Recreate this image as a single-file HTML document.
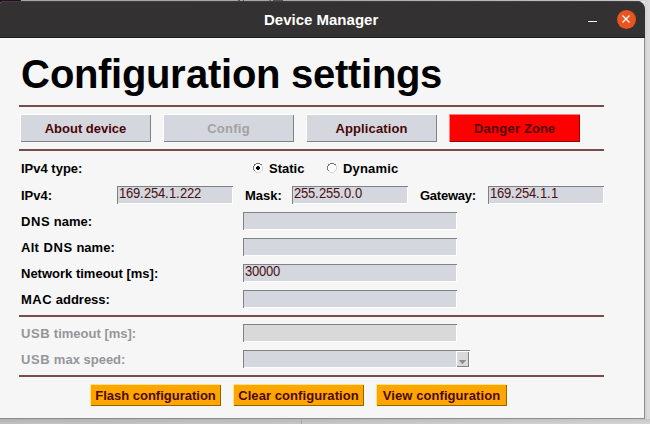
<!DOCTYPE html>
<html><head><meta charset="utf-8">
<style>
*{margin:0;padding:0;box-sizing:border-box}
html,body{width:650px;height:424px;overflow:hidden;background:#e4e4e4;font-family:"Liberation Sans",sans-serif}
.abs{position:absolute}
.hd b{display:inline-block;font-weight:bold}
svg{display:block}
#win{position:absolute;left:-1px;top:1px;width:646px;height:418px;border-radius:5.5px 8px 0 0;background:#f6f6f6;overflow:hidden}

#title{position:absolute;left:0;top:0;width:100%;height:37px;background:#333131;box-shadow:inset 0 1px 0 #403e3e;border-bottom:1px solid #1c1c1c}
.t{position:absolute;white-space:nowrap;line-height:1}
.lbl{font-weight:bold;font-size:13px;color:#000}
.sep{position:absolute;left:19px;width:585px;height:2px;background:#7a4b4b}
.btn{position:absolute;width:131px;height:28px;background:#d4d7de;padding:1px;box-shadow:inset 1px 1px 0 #fff,inset -1px -1px 0 #7f8185;font-weight:bold;font-size:13px;color:#4b0505;text-align:center;line-height:27px}
.ent i{font-style:normal;display:inline-block;transform:scaleY(1.08);transform-origin:50% 11.5px}
.ent{position:absolute;height:18px;background:#d4d7de;padding:1px 1px 1px 2px;box-shadow:inset 1px 1px 0 #7f8185,inset -1px -1px 0 #fff;font-size:13px;color:#4a0f0f;line-height:14px}
.obtn{position:absolute;width:131px;height:22px;background:#ffa500;padding:1px;box-shadow:inset 1px 1px 0 #ffe77f,inset -1px -1px 0 #996300;font-weight:bold;font-size:13px;color:#4a0a00;text-align:center;line-height:21px;letter-spacing:.07px}
</style></head>
<body>
<div class="abs" style="left:0;top:0;width:650px;height:1px;background:linear-gradient(to right,#a6a6a6,#a8a8a8 50%,#c4c4c4 95%,#d8d8d8)"></div>
<div class="abs" style="left:0;top:0;width:20px;height:1px;background:#2c0a22"></div>
<div class="abs" style="left:20px;top:0;width:1px;height:1px;background:#222"></div>
<div class="abs" style="left:238px;top:0;width:2px;height:1px;background:#5a5a5a"></div>
<div class="abs" style="left:243px;top:0;width:1px;height:1px;background:#5a5a5a"></div>
<div class="abs" style="left:269px;top:0;width:2px;height:1px;background:#6a6a6a"></div>
<div class="abs" style="left:273px;top:0;width:10px;height:1px;background:#4c5462"></div>
<div class="abs" style="left:645px;top:0;width:5px;height:424px;background:linear-gradient(to right,#cfcfcf,#d9d9d9 40%,#dcdcdc)"></div>
<div class="abs" style="left:0;top:419px;width:650px;height:5px;background:linear-gradient(to right,#bcbcbc,#c4c4c4 50%,#d2d2d2)"></div><div class="abs" style="left:0;top:419px;width:650px;height:5px;background:linear-gradient(to bottom,rgba(0,0,0,.06),rgba(255,255,255,.08))"></div>
<div class="abs" style="left:301px;top:419px;width:1px;height:5px;background:#a3a6ad"></div>
<div class="abs" style="left:0;top:0;width:8px;height:8px;background:#2c0a22"></div>
<div id="win">
  <div id="title"></div><div class="abs" style="left:645px;top:37px;width:1px;height:381px;background:#8c8c8c"></div><div class="abs" style="left:0;top:417px;width:646px;height:1px;background:#8c8c8c"></div>
</div>
<!-- title text -->
<div class="t" style="left:264px;top:12px;font-weight:bold;font-size:15px;color:#fff">Device Manager</div>
<!-- minimize -->
<div class="abs" style="left:588px;top:21px;width:9px;height:1px;background:#fff"></div>
<!-- close -->
<div class="abs" style="left:616.5px;top:9.5px;width:19px;height:19px;border-radius:50%;background:#e95420"></div>
<svg class="abs" style="left:617px;top:10px" width="18" height="18"><path d="M5.5 5.5L12.5 12.5M12.5 5.5L5.5 12.5" stroke="#fff" stroke-width="1.3"/></svg>

<div class="t hd" style="left:21px;top:54px;font-weight:bold;font-size:40px;color:#000"><b style="width:29px">C</b><b style="width:24px">o</b><b style="width:24px">n</b><b style="width:13px">f</b><b style="width:11px">i</b><b style="width:24px">g</b><b style="width:24px">u</b><b style="width:16px">r</b><b style="width:22px">a</b><b style="width:13px">t</b><b style="width:11px">i</b><b style="width:24px">o</b><b style="width:24px">n</b><b style="width:11px">&nbsp;</b><b style="width:22px">s</b><b style="width:22px">e</b><b style="width:13px">t</b><b style="width:13px">t</b><b style="width:11px">i</b><b style="width:24px">n</b><b style="width:24px">g</b><b style="width:22px">s</b></div>

<div class="sep" style="top:105px"></div>
<div class="btn" style="left:20px;top:114px">About device</div>
<div class="btn" style="left:163px;top:114px;color:#a3a3a3;letter-spacing:.25px">Config</div>
<div class="btn" style="left:306px;top:114px;letter-spacing:.12px">Application</div>
<div class="btn" style="left:449px;top:114px;background:#ff0000;box-shadow:inset 1px 1px 0 #ff7f7f,inset -1px -1px 0 #990000"><span style="letter-spacing:.28px">Danger</span> Zone</div>
<div class="sep" style="top:149px"></div>

<div class="t lbl" style="left:21px;top:162px">IPv4 type:</div>
<div class="t lbl" style="left:21px;top:189px">IPv4:</div>
<div class="t lbl" style="left:21px;top:215px"><span style="letter-spacing:.6px">DNS</span> name:</div>
<div class="t lbl" style="left:21px;top:241px"><span style="letter-spacing:.25px">Alt</span><span style="letter-spacing:.85px"> </span><span style="letter-spacing:.6px">DNS</span> name:</div>
<div class="t lbl" style="left:21px;top:267px">Network timeout [ms]:</div>
<div class="t lbl" style="left:21px;top:293px"><span style="letter-spacing:.5px">MAC</span> address:</div>

<div class="abs" style="left:253px;top:163px;width:10px;height:10px"><svg width="10" height="10" shape-rendering="crispEdges"><rect x="3" y="1" width="1" height="1" fill="#fff"/><rect x="4" y="1" width="1" height="1" fill="#fff"/><rect x="5" y="1" width="1" height="1" fill="#fff"/><rect x="6" y="1" width="1" height="1" fill="#fff"/><rect x="2" y="2" width="1" height="1" fill="#fff"/><rect x="3" y="2" width="1" height="1" fill="#fff"/><rect x="4" y="2" width="1" height="1" fill="#fff"/><rect x="5" y="2" width="1" height="1" fill="#fff"/><rect x="6" y="2" width="1" height="1" fill="#fff"/><rect x="7" y="2" width="1" height="1" fill="#fff"/><rect x="1" y="3" width="1" height="1" fill="#fff"/><rect x="2" y="3" width="1" height="1" fill="#fff"/><rect x="3" y="3" width="1" height="1" fill="#fff"/><rect x="4" y="3" width="1" height="1" fill="#fff"/><rect x="5" y="3" width="1" height="1" fill="#fff"/><rect x="6" y="3" width="1" height="1" fill="#fff"/><rect x="7" y="3" width="1" height="1" fill="#fff"/><rect x="8" y="3" width="1" height="1" fill="#fff"/><rect x="1" y="4" width="1" height="1" fill="#fff"/><rect x="2" y="4" width="1" height="1" fill="#fff"/><rect x="3" y="4" width="1" height="1" fill="#fff"/><rect x="4" y="4" width="1" height="1" fill="#fff"/><rect x="5" y="4" width="1" height="1" fill="#fff"/><rect x="6" y="4" width="1" height="1" fill="#fff"/><rect x="7" y="4" width="1" height="1" fill="#fff"/><rect x="8" y="4" width="1" height="1" fill="#fff"/><rect x="1" y="5" width="1" height="1" fill="#fff"/><rect x="2" y="5" width="1" height="1" fill="#fff"/><rect x="3" y="5" width="1" height="1" fill="#fff"/><rect x="4" y="5" width="1" height="1" fill="#fff"/><rect x="5" y="5" width="1" height="1" fill="#fff"/><rect x="6" y="5" width="1" height="1" fill="#fff"/><rect x="7" y="5" width="1" height="1" fill="#fff"/><rect x="8" y="5" width="1" height="1" fill="#fff"/><rect x="1" y="6" width="1" height="1" fill="#fff"/><rect x="2" y="6" width="1" height="1" fill="#fff"/><rect x="3" y="6" width="1" height="1" fill="#fff"/><rect x="4" y="6" width="1" height="1" fill="#fff"/><rect x="5" y="6" width="1" height="1" fill="#fff"/><rect x="6" y="6" width="1" height="1" fill="#fff"/><rect x="7" y="6" width="1" height="1" fill="#fff"/><rect x="8" y="6" width="1" height="1" fill="#fff"/><rect x="2" y="7" width="1" height="1" fill="#fff"/><rect x="3" y="7" width="1" height="1" fill="#fff"/><rect x="4" y="7" width="1" height="1" fill="#fff"/><rect x="5" y="7" width="1" height="1" fill="#fff"/><rect x="6" y="7" width="1" height="1" fill="#fff"/><rect x="7" y="7" width="1" height="1" fill="#fff"/><rect x="3" y="8" width="1" height="1" fill="#fff"/><rect x="4" y="8" width="1" height="1" fill="#fff"/><rect x="5" y="8" width="1" height="1" fill="#fff"/><rect x="6" y="8" width="1" height="1" fill="#fff"/><rect x="3" y="0" width="1" height="1" fill="#727272"/><rect x="4" y="0" width="1" height="1" fill="#727272"/><rect x="5" y="0" width="1" height="1" fill="#727272"/><rect x="6" y="0" width="1" height="1" fill="#727272"/><rect x="1" y="1" width="1" height="1" fill="#727272"/><rect x="2" y="1" width="1" height="1" fill="#727272"/><rect x="7" y="1" width="1" height="1" fill="#727272"/><rect x="8" y="1" width="1" height="1" fill="#727272"/><rect x="1" y="2" width="1" height="1" fill="#727272"/><rect x="0" y="3" width="1" height="1" fill="#727272"/><rect x="0" y="4" width="1" height="1" fill="#727272"/><rect x="0" y="5" width="1" height="1" fill="#727272"/><rect x="0" y="6" width="1" height="1" fill="#727272"/><rect x="1" y="7" width="1" height="1" fill="#727272"/><rect x="3" y="9" width="1" height="1" fill="#d4d4d4"/><rect x="4" y="9" width="1" height="1" fill="#d4d4d4"/><rect x="5" y="9" width="1" height="1" fill="#d4d4d4"/><rect x="6" y="9" width="1" height="1" fill="#d4d4d4"/><rect x="9" y="3" width="1" height="1" fill="#d4d4d4"/><rect x="9" y="4" width="1" height="1" fill="#d4d4d4"/><rect x="9" y="5" width="1" height="1" fill="#d4d4d4"/><rect x="9" y="6" width="1" height="1" fill="#d4d4d4"/><rect x="8" y="2" width="1" height="1" fill="#d4d4d4"/><rect x="8" y="7" width="1" height="1" fill="#d4d4d4"/><rect x="2" y="8" width="1" height="1" fill="#d4d4d4"/><rect x="7" y="8" width="1" height="1" fill="#d4d4d4"/><rect x="4" y="3" width="1" height="1" fill="#000"/><rect x="5" y="3" width="1" height="1" fill="#000"/><rect x="3" y="4" width="1" height="1" fill="#000"/><rect x="4" y="4" width="1" height="1" fill="#000"/><rect x="5" y="4" width="1" height="1" fill="#000"/><rect x="6" y="4" width="1" height="1" fill="#000"/><rect x="3" y="5" width="1" height="1" fill="#000"/><rect x="4" y="5" width="1" height="1" fill="#000"/><rect x="5" y="5" width="1" height="1" fill="#000"/><rect x="6" y="5" width="1" height="1" fill="#000"/><rect x="4" y="6" width="1" height="1" fill="#000"/><rect x="5" y="6" width="1" height="1" fill="#000"/><rect x="3" y="3" width="1" height="1" fill="#e0e0e0"/><rect x="6" y="3" width="1" height="1" fill="#e0e0e0"/><rect x="3" y="6" width="1" height="1" fill="#e0e0e0"/><rect x="6" y="6" width="1" height="1" fill="#e0e0e0"/></svg></div>
<div class="t lbl" style="left:269px;top:162px">Static</div>
<div class="abs" style="left:327px;top:163px;width:10px;height:10px"><svg width="10" height="10" shape-rendering="crispEdges"><rect x="3" y="1" width="1" height="1" fill="#fff"/><rect x="4" y="1" width="1" height="1" fill="#fff"/><rect x="5" y="1" width="1" height="1" fill="#fff"/><rect x="6" y="1" width="1" height="1" fill="#fff"/><rect x="2" y="2" width="1" height="1" fill="#fff"/><rect x="3" y="2" width="1" height="1" fill="#fff"/><rect x="4" y="2" width="1" height="1" fill="#fff"/><rect x="5" y="2" width="1" height="1" fill="#fff"/><rect x="6" y="2" width="1" height="1" fill="#fff"/><rect x="7" y="2" width="1" height="1" fill="#fff"/><rect x="1" y="3" width="1" height="1" fill="#fff"/><rect x="2" y="3" width="1" height="1" fill="#fff"/><rect x="3" y="3" width="1" height="1" fill="#fff"/><rect x="4" y="3" width="1" height="1" fill="#fff"/><rect x="5" y="3" width="1" height="1" fill="#fff"/><rect x="6" y="3" width="1" height="1" fill="#fff"/><rect x="7" y="3" width="1" height="1" fill="#fff"/><rect x="8" y="3" width="1" height="1" fill="#fff"/><rect x="1" y="4" width="1" height="1" fill="#fff"/><rect x="2" y="4" width="1" height="1" fill="#fff"/><rect x="3" y="4" width="1" height="1" fill="#fff"/><rect x="4" y="4" width="1" height="1" fill="#fff"/><rect x="5" y="4" width="1" height="1" fill="#fff"/><rect x="6" y="4" width="1" height="1" fill="#fff"/><rect x="7" y="4" width="1" height="1" fill="#fff"/><rect x="8" y="4" width="1" height="1" fill="#fff"/><rect x="1" y="5" width="1" height="1" fill="#fff"/><rect x="2" y="5" width="1" height="1" fill="#fff"/><rect x="3" y="5" width="1" height="1" fill="#fff"/><rect x="4" y="5" width="1" height="1" fill="#fff"/><rect x="5" y="5" width="1" height="1" fill="#fff"/><rect x="6" y="5" width="1" height="1" fill="#fff"/><rect x="7" y="5" width="1" height="1" fill="#fff"/><rect x="8" y="5" width="1" height="1" fill="#fff"/><rect x="1" y="6" width="1" height="1" fill="#fff"/><rect x="2" y="6" width="1" height="1" fill="#fff"/><rect x="3" y="6" width="1" height="1" fill="#fff"/><rect x="4" y="6" width="1" height="1" fill="#fff"/><rect x="5" y="6" width="1" height="1" fill="#fff"/><rect x="6" y="6" width="1" height="1" fill="#fff"/><rect x="7" y="6" width="1" height="1" fill="#fff"/><rect x="8" y="6" width="1" height="1" fill="#fff"/><rect x="2" y="7" width="1" height="1" fill="#fff"/><rect x="3" y="7" width="1" height="1" fill="#fff"/><rect x="4" y="7" width="1" height="1" fill="#fff"/><rect x="5" y="7" width="1" height="1" fill="#fff"/><rect x="6" y="7" width="1" height="1" fill="#fff"/><rect x="7" y="7" width="1" height="1" fill="#fff"/><rect x="3" y="8" width="1" height="1" fill="#fff"/><rect x="4" y="8" width="1" height="1" fill="#fff"/><rect x="5" y="8" width="1" height="1" fill="#fff"/><rect x="6" y="8" width="1" height="1" fill="#fff"/><rect x="3" y="0" width="1" height="1" fill="#727272"/><rect x="4" y="0" width="1" height="1" fill="#727272"/><rect x="5" y="0" width="1" height="1" fill="#727272"/><rect x="6" y="0" width="1" height="1" fill="#727272"/><rect x="1" y="1" width="1" height="1" fill="#727272"/><rect x="2" y="1" width="1" height="1" fill="#727272"/><rect x="7" y="1" width="1" height="1" fill="#727272"/><rect x="8" y="1" width="1" height="1" fill="#727272"/><rect x="1" y="2" width="1" height="1" fill="#727272"/><rect x="0" y="3" width="1" height="1" fill="#727272"/><rect x="0" y="4" width="1" height="1" fill="#727272"/><rect x="0" y="5" width="1" height="1" fill="#727272"/><rect x="0" y="6" width="1" height="1" fill="#727272"/><rect x="1" y="7" width="1" height="1" fill="#727272"/><rect x="3" y="9" width="1" height="1" fill="#d4d4d4"/><rect x="4" y="9" width="1" height="1" fill="#d4d4d4"/><rect x="5" y="9" width="1" height="1" fill="#d4d4d4"/><rect x="6" y="9" width="1" height="1" fill="#d4d4d4"/><rect x="9" y="3" width="1" height="1" fill="#d4d4d4"/><rect x="9" y="4" width="1" height="1" fill="#d4d4d4"/><rect x="9" y="5" width="1" height="1" fill="#d4d4d4"/><rect x="9" y="6" width="1" height="1" fill="#d4d4d4"/><rect x="8" y="2" width="1" height="1" fill="#d4d4d4"/><rect x="8" y="7" width="1" height="1" fill="#d4d4d4"/><rect x="2" y="8" width="1" height="1" fill="#d4d4d4"/><rect x="7" y="8" width="1" height="1" fill="#d4d4d4"/></svg></div>
<div class="t lbl" style="left:343px;top:162px;letter-spacing:.17px">Dynamic</div>

<div class="ent" style="left:117px;top:186px;width:116px"><i style="width:7px">1</i><i style="width:7px">6</i><i style="width:7px">9</i><i style="width:4px">.</i><i style="width:7px">2</i><i style="width:7px">5</i><i style="width:7px">4</i><i style="width:4px">.</i><i style="width:7px">1</i><i style="width:4px">.</i><i style="width:7px">2</i><i style="width:7px">2</i><i style="width:7px">2</i></div>
<div class="t lbl" style="left:245px;top:189px">Mask:</div>
<div class="ent" style="left:292px;top:186px;width:116px"><i style="width:7px">2</i><i style="width:7px">5</i><i style="width:7px">5</i><i style="width:4px">.</i><i style="width:7px">2</i><i style="width:7px">5</i><i style="width:7px">5</i><i style="width:4px">.</i><i style="width:7px">0</i><i style="width:4px">.</i><i style="width:7px">0</i></div>
<div class="t lbl" style="left:420px;top:189px;letter-spacing:-.25px">Gateway:</div>
<div class="ent" style="left:488px;top:186px;width:116px"><i style="width:7px">1</i><i style="width:7px">6</i><i style="width:7px">9</i><i style="width:4px">.</i><i style="width:7px">2</i><i style="width:7px">5</i><i style="width:7px">4</i><i style="width:4px">.</i><i style="width:7px">1</i><i style="width:4px">.</i><i style="width:7px">1</i></div>

<div class="ent" style="left:243px;top:212px;width:214px"></div>
<div class="ent" style="left:243px;top:238px;width:214px"></div>
<div class="ent" style="left:243px;top:264px;width:214px"><i style="width:7px">3</i><i style="width:7px">0</i><i style="width:7px">0</i><i style="width:7px">0</i><i style="width:7px">0</i></div>
<div class="ent" style="left:243px;top:290px;width:214px"></div>

<div class="sep" style="top:315px"></div>
<div class="t lbl" style="left:21px;top:327px;color:#95959b"><span style="letter-spacing:.6px">USB</span> timeout [ms]:</div>
<div class="t lbl" style="left:21px;top:353px;color:#95959b"><span style="letter-spacing:.6px">USB</span> max speed:</div>
<div class="ent" style="left:243px;top:324px;width:214px;background:#d9d9d9"></div>
<div class="ent" style="left:243px;top:350px;width:227px"></div>
<div class="abs" style="left:456px;top:351px;width:13px;height:16px;background:#d9d9d9;box-shadow:inset 1px 1px 0 #fff,inset -1px -1px 0 #828282"></div>
<svg class="abs" style="left:456px;top:351px" width="13" height="16"><path d="M2.8 9H10.2L6.5 13.2Z" fill="#8c8c8c"/></svg>
<div class="sep" style="top:375px"></div>

<div class="obtn" style="left:90px;top:384px;letter-spacing:0">Flash configuration</div>
<div class="obtn" style="left:233px;top:384px">Clear configuration</div>
<div class="obtn" style="left:376px;top:384px">View configuration</div>
</body></html>
